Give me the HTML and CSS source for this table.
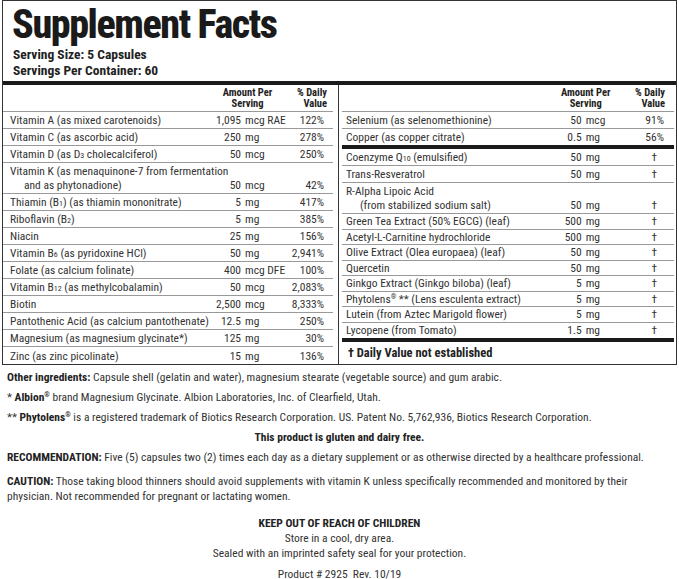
FILE: index.html
```html
<!DOCTYPE html>
<html>
<head>
<meta charset="utf-8">
<link rel="stylesheet" href="styles.css">
</head>
<body>
<div class="label">
  <h1 class="title">Supplement Facts</h1>
  <div class="servings">
    <div class="serving">Serving Size: 5 Capsules</div>
    <div class="serving">Servings Per Container: 60</div>
  </div>
  <div class="panels">
    <div class="panel panel-left">
      <table class="facts">
        <colgroup><col class="c-name"><col class="c-num"><col class="c-unit"><col class="c-dv"></colgroup>
        <thead>
          <tr><th class="name"></th><th class="amt" colspan="2">Amount Per<br>Serving</th><th class="dv">% Daily<br>Value</th></tr>
        </thead>
        <tbody>
          <tr><td class="name">Vitamin A (as mixed carotenoids)</td><td class="num">1,095</td><td class="unit">mcg RAE</td><td class="dv">122%</td></tr>
          <tr><td class="name">Vitamin C (as ascorbic acid)</td><td class="num">250</td><td class="unit">mg</td><td class="dv">278%</td></tr>
          <tr><td class="name">Vitamin D (as D<small>3</small> cholecalciferol)</td><td class="num">50</td><td class="unit">mcg</td><td class="dv">250%</td></tr>
          <tr><td class="name">Vitamin K (as menaquinone-7 from fermentation<br><span class="indent">and as phytonadione)</span></td><td class="num">50</td><td class="unit">mcg</td><td class="dv">42%</td></tr>
          <tr><td class="name">Thiamin (B<small>1</small>) (as thiamin mononitrate)</td><td class="num">5</td><td class="unit">mg</td><td class="dv">417%</td></tr>
          <tr><td class="name">Riboflavin (B<small>2</small>)</td><td class="num">5</td><td class="unit">mg</td><td class="dv">385%</td></tr>
          <tr><td class="name">Niacin</td><td class="num">25</td><td class="unit">mg</td><td class="dv">156%</td></tr>
          <tr><td class="name">Vitamin B<small>6</small> (as pyridoxine HCl)</td><td class="num">50</td><td class="unit">mg</td><td class="dv">2,941%</td></tr>
          <tr><td class="name">Folate (as calcium folinate)</td><td class="num">400</td><td class="unit">mcg DFE</td><td class="dv">100%</td></tr>
          <tr><td class="name">Vitamin B<small>12</small> (as methylcobalamin)</td><td class="num">50</td><td class="unit">mcg</td><td class="dv">2,083%</td></tr>
          <tr><td class="name">Biotin</td><td class="num">2,500</td><td class="unit">mcg</td><td class="dv">8,333%</td></tr>
          <tr><td class="name">Pantothenic Acid (as calcium pantothenate)</td><td class="num">12.5</td><td class="unit">mg</td><td class="dv">250%</td></tr>
          <tr><td class="name">Magnesium (as magnesium glycinate*)</td><td class="num">125</td><td class="unit">mg</td><td class="dv">30%</td></tr>
          <tr class="last"><td class="name">Zinc (as zinc picolinate)</td><td class="num">15</td><td class="unit">mg</td><td class="dv">136%</td></tr>
        </tbody>
      </table>
    </div>
    <div class="panel panel-right">
      <table class="facts">
        <colgroup><col class="c-name"><col class="c-num"><col class="c-unit"><col class="c-dv"></colgroup>
        <thead>
          <tr><th class="name"></th><th class="amt" colspan="2">Amount Per<br>Serving</th><th class="dv">% Daily<br>Value</th></tr>
        </thead>
        <tbody>
          <tr><td class="name">Selenium (as selenomethionine)</td><td class="num">50</td><td class="unit">mcg</td><td class="dv">91%</td></tr>
          <tr class="thick"><td class="name">Copper (as copper citrate)</td><td class="num">0.5</td><td class="unit">mg</td><td class="dv">56%</td></tr>
          <tr><td class="name">Coenzyme Q<small>10</small> (emulsified)</td><td class="num">50</td><td class="unit">mg</td><td class="dv dag">†</td></tr>
          <tr><td class="name">Trans-Resveratrol</td><td class="num">50</td><td class="unit">mg</td><td class="dv dag">†</td></tr>
          <tr><td class="name">R-Alpha Lipoic Acid<br><span class="indent">(from stabilized sodium salt)</span></td><td class="num">50</td><td class="unit">mg</td><td class="dv dag">†</td></tr>
          <tr class="tight"><td class="name">Green Tea Extract (50% EGCG) (leaf)</td><td class="num">500</td><td class="unit">mg</td><td class="dv dag">†</td></tr>
          <tr class="tight"><td class="name">Acetyl-L-Carnitine hydrochloride</td><td class="num">500</td><td class="unit">mg</td><td class="dv dag">†</td></tr>
          <tr class="tight"><td class="name">Olive Extract (Olea europaea) (leaf)</td><td class="num">50</td><td class="unit">mg</td><td class="dv dag">†</td></tr>
          <tr class="tight"><td class="name">Quercetin</td><td class="num">50</td><td class="unit">mg</td><td class="dv dag">†</td></tr>
          <tr class="tight"><td class="name">Ginkgo Extract (Ginkgo biloba) (leaf)</td><td class="num">5</td><td class="unit">mg</td><td class="dv dag">†</td></tr>
          <tr class="tight"><td class="name">Phytolens<sup>®</sup> ** (Lens esculenta extract)</td><td class="num">5</td><td class="unit">mg</td><td class="dv dag">†</td></tr>
          <tr class="tight"><td class="name">Lutein (from Aztec Marigold flower)</td><td class="num">5</td><td class="unit">mg</td><td class="dv dag">†</td></tr>
          <tr class="tight last"><td class="name">Lycopene (from Tomato)</td><td class="num">1.5</td><td class="unit">mg</td><td class="dv dag">†</td></tr>
        </tbody>
      </table>
      <div class="dv-note">† Daily Value not established</div>
    </div>
  </div>
</div>
<div class="notes">
  <p><b>Other ingredients:</b> Capsule shell (gelatin and water), magnesium stearate (vegetable source) and gum arabic.</p>
  <p>* <b>Albion<sup>®</sup></b> brand Magnesium Glycinate. Albion Laboratories, Inc. of Clearfield, Utah.</p>
  <p>** <b>Phytolens<sup>®</sup></b> is a registered trademark of Biotics Research Corporation. US. Patent No. 5,762,936, Biotics Research Corporation.</p>
  <p class="center"><b>This product is gluten and dairy free.</b></p>
  <p><b>RECOMMENDATION:</b> Five (5) capsules two (2) times each day as a dietary supplement or as otherwise directed by a healthcare professional.</p>
  <p class="caution"><b>CAUTION:</b> Those taking blood thinners should avoid supplements with vitamin K unless specifically recommended and monitored by their<br>physician. Not recommended for pregnant or lactating women.</p>
  <div class="keep">
    <div class="keep-title">KEEP OUT OF REACH OF CHILDREN</div>
    <div>Store in a cool, dry area.</div>
    <div>Sealed with an imprinted safety seal for your protection.</div>
    <div class="product">Product # 2925&nbsp; Rev. 10/19</div>
  </div>
</div>
</body>
</html>
```

FILE: styles.css
```css
* { box-sizing: border-box; }
html, body { margin: 0; padding: 0; background: #fff; }
body {
  font-family: "Roboto", "Liberation Sans", sans-serif;
  font-stretch: 75%;
  color: #333;
  width: 679px;
}
b { font-weight: 700; color: #222; }
.label {
  margin: 0 2px;
  border: 1px solid #333;
  width: 675px;
}
.title {
  margin: 0;
  padding: 3px 0 0 9px;
  font-size: 40px;
  line-height: 42px;
  font-weight: 800;
  letter-spacing: -1.4px;
  color: #1a1a1a;
}
.servings { padding-left: 10px; }
.serving {
  font-size: 13.5px;
  font-weight: 700;
  line-height: 16px;
  color: #222;
}
.panels {
  margin-top: 3px;
  border-top: 4px solid #1a1a1a;
  display: flex;
}
.panel-left {
  width: 336px;
  border-right: 1px solid #333;
  padding-right: 5px;
}
.panel-right { flex: 1; padding: 0 2px 0 3px; }
.facts {
  width: 100%;
  table-layout: fixed;
  border-collapse: collapse;
  font-size: 11.5px;
}
.panel-left .c-name { width: 202px; }
.panel-left .c-num { width: 39px; }
.panel-left .c-unit { width: 46px; }
.panel-left .c-dv { width: 43px; }
.panel-right .c-name { width: 213px; }
.panel-right .c-num { width: 29px; }
.panel-right .c-unit { width: 31px; }
.panel-right .c-dv { width: 58px; }
.facts th {
  font-size: 10.5px;
  line-height: 11px;
  font-weight: 700;
  color: #222;
  padding: 2px 0 2px;
  border-bottom: 1px solid #999;
  vertical-align: bottom;
}
.facts th.amt { text-align: center; }
.facts th.dv { text-align: right; padding-right: 6px; }
.panel-right .facts th.dv { padding-right: 9px; }
.facts td {
  height: 17px;
  line-height: 14px;
  padding-top: 1px;
  padding-bottom: 1px;
  border-bottom: 1px solid #999;
  vertical-align: bottom;
  white-space: nowrap;
}
.facts td.name { padding-left: 7px; }
.panel-right .facts td.name { padding-left: 4px; }
.facts td.num { text-align: right; padding-right: 3px; }
.facts td.unit { text-align: left; }
.facts td.dv { text-align: right; padding-right: 9px; }
.panel-right .facts td.dv { padding-right: 10px; }
.panel-right .facts td.dag { padding-right: 17px; }
.facts tr.last td { border-bottom: none; }
.facts tr.thick td { border-bottom: 4px solid #1a1a1a; }
.facts tr.tight td { height: 15.5px; line-height: 14.5px; padding-top: 0; padding-bottom: 0; }
.facts small { font-size: 8px; line-height: 0; }
.facts sup, .notes sup { font-size: 7px; vertical-align: 4px; line-height: 0; }
.indent { padding-left: 14px; }
.dv-note {
  border-top: 4px solid #1a1a1a;
  font-size: 12.5px;
  font-weight: 700;
  color: #222;
  line-height: 14px;
  padding: 4px 0 4px 6px;
}
.notes {
  padding: 5px 7px 0;
  font-size: 11.5px;
  line-height: 14px;
}
.notes p { margin: 0 0 6px; }
.notes .center { text-align: center; }
.notes .caution { margin-top: 10px; line-height: 15px; }
.keep { text-align: center; margin-top: 12px; line-height: 15px; }
.keep-title { font-weight: 700; color: #222; }
.keep .product { margin-top: 6px; }
```
